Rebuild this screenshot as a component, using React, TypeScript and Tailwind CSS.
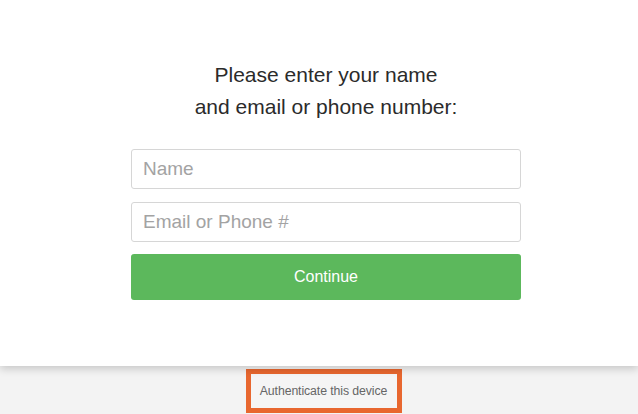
export default function App() {
  return (
    <div className="flex h-[414px] w-[638px] flex-col overflow-hidden bg-[#f3f3f3] font-['Liberation_Sans',Arial,sans-serif]">
      {/* login panel */}
      <section className="relative z-10 h-[366px] shrink-0 bg-white shadow-[0_3px_8px_rgba(0,0,0,0.18)]">
        <div className="ml-[131px] flex w-[390px] flex-col pt-[59px]">
          <h1 className="text-center text-[21px] leading-[32px] text-[#2b2b2b]">
            Please enter your name
            <br />
            and email or phone number:
          </h1>

          <input
            type="text"
            placeholder="Name"
            className="mt-[26px] h-[40px] w-full rounded-[3px] border border-[#d6d6d6] bg-white px-[11px] text-[19px] text-[#333] outline-none placeholder:text-[#a3a3a3]"
          />
          <input
            type="text"
            placeholder="Email or Phone #"
            className="mt-[13px] h-[40px] w-full rounded-[3px] border border-[#d6d6d6] bg-white px-[11px] text-[19px] text-[#333] outline-none placeholder:text-[#a3a3a3]"
          />
          <button className="mt-[12px] h-[46px] w-full rounded-[3px] bg-[#5cb85c] text-[16px] text-white">
            Continue
          </button>
        </div>
      </section>

      {/* footer */}
      <footer className="flex flex-1 items-end justify-center pb-[1px] pl-[9px]">
        <div className="flex h-[44px] w-[156px] items-center justify-center border-[5px] border-[#e8672f] bg-[#f5f5f5] text-[12.3px] tracking-[-0.1px] text-[#666]">
          Authenticate this device
        </div>
      </footer>
    </div>
  );
}
